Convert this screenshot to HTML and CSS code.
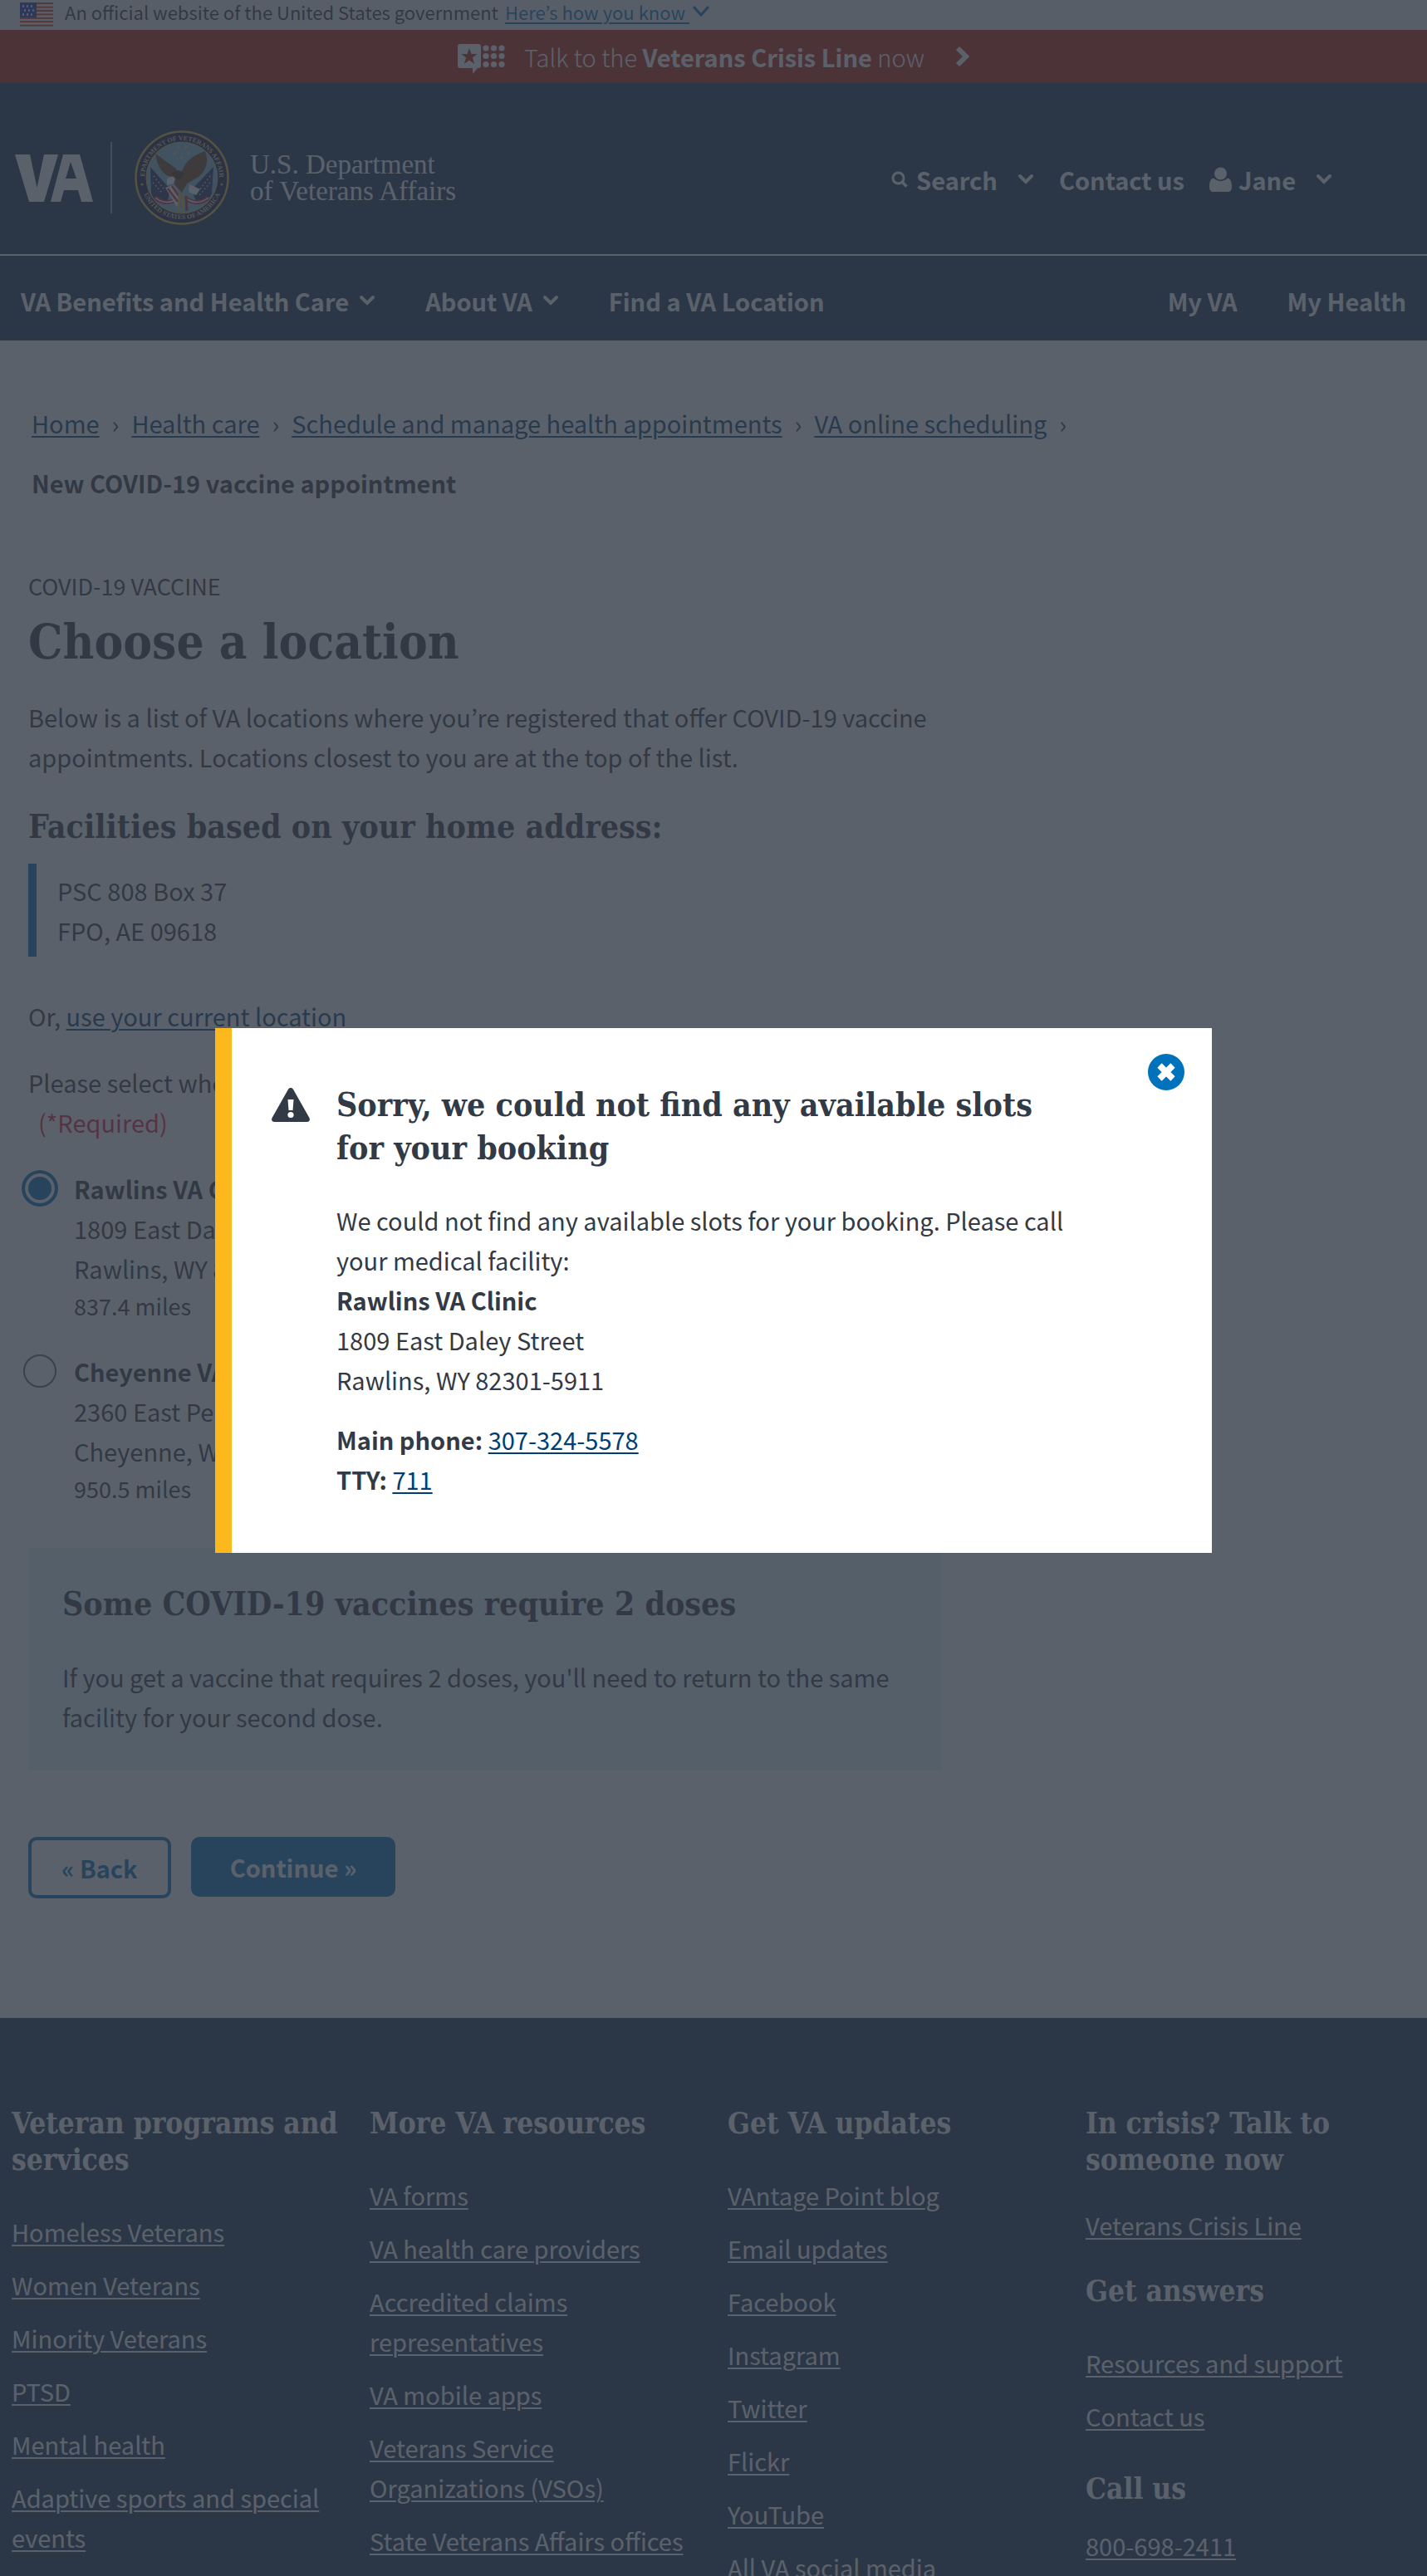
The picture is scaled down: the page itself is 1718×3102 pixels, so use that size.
FILE: index.html
```html
<!DOCTYPE html>
<html lang="en">
<head>
<meta charset="utf-8">
<meta name="viewport" content="width=device-width, initial-scale=1">
<title>New COVID-19 vaccine appointment | Veterans Affairs</title>
<link rel="stylesheet" href="styles.css">
</head>
<body>
<svg class="sprite" aria-hidden="true">
  <symbol id="chevron" viewBox="0 0 20 14"><path d="M3 3l7 7 7-7" fill="none" stroke="currentColor" stroke-width="4" stroke-linecap="round"/></symbol>
  <symbol id="star" viewBox="-10 -10 20 20"><path d="M0-10L2.3-3.1H9.5L3.7 1.2 5.9 8.1 0 3.9-5.9 8.1-3.7 1.2-9.5-3.1H-2.3Z" fill="currentColor"/></symbol>
</svg>

<header>
  <div class="gov">
    <svg class="gov-flag" viewBox="0 0 40 29" aria-hidden="true">
      <path fill="#fff" d="M0 0h40v29H0z"/>
      <path stroke="#db3e1f" stroke-width="2.3" d="M0 1.2h40M0 5.6h40M0 10h40M0 14.4h40M0 18.8h40M0 23.2h40M0 27.6h40"/>
      <path fill="#1e33b1" d="M0 0h20v18H0z"/>
      <path stroke="#fff" stroke-width="2.4" stroke-dasharray="2 3" d="M3 4.500h15M5 9.500h13M3 14.500h15"/>
    </svg>
    <span>An official website of the United States government</span>
    <button class="gov-link" type="button"><u>Here’s how you know </u><svg class="chev" viewBox="0 0 20 14" aria-hidden="true"><path d="M1 1l9 10 9-10" fill="none" stroke="currentColor" stroke-width="3"/></svg></button>
  </div>

  <a class="crisis" href="#crisis">
    <svg class="crisis-icon" viewBox="0 0 57 36" aria-hidden="true">
      <path fill="#fff" d="M3 0h22a3 3 0 0 1 3 3v23a3 3 0 0 1-3 3h-1l-6 7v-7H3a3 3 0 0 1-3-3V3a3 3 0 0 1 3-3z"/>
      <path fill="#b51d09" d="M14 5l2.600 7h6.900l-5.600 4.500 2.300 7.500-6.200-4.600L7.800 24l2.300-7.500L4.500 12h6.900z"/>
      <g fill="#fff"><circle cx="34" cy="5" r="3.600"/><circle cx="43.500" cy="5" r="3.600"/><circle cx="53" cy="5" r="3.600"/><circle cx="34" cy="14.500" r="3.600"/><circle cx="43.500" cy="14.500" r="3.600"/><circle cx="53" cy="14.500" r="3.600"/><circle cx="34" cy="24.500" r="3.600"/><circle cx="43.500" cy="24.500" r="3.600"/><circle cx="53" cy="24.500" r="3.600"/></g>
    </svg>
    <span class="crisis-text">Talk to the <b>Veterans Crisis Line</b> now</span>
    <svg class="crisis-arrow" viewBox="0 0 17 26" aria-hidden="true"><path d="M3 3l10 10L3 23" fill="none" stroke="#fff" stroke-width="6"/></svg>
  </a>

  <div class="masthead">
    <a class="brand" href="#home" aria-label="U.S. Department of Veterans Affairs">
      <svg class="brand-va" viewBox="0 0 94 57" aria-hidden="true"><path fill="#fff" fill-rule="evenodd" d="M0 0h18l8.500 40L35 0h17L35 57H17zM58 0h20l16 57H80l-4-14H59l-4 14H43zM61 29h13L67 9z"/></svg>
      <span class="brand-rule"></span>
      <svg class="brand-seal" viewBox="0 0 116 116" aria-hidden="true">
        <defs>
          <path id="arcTop" d="M13 58a45 45 0 0 1 90 0"/>
          <path id="arcLow" d="M8 58a50 50 0 0 0 100 0"/>
        </defs>
        <circle cx="58" cy="58" r="57" fill="#14183f"/>
        <circle cx="58" cy="58" r="55.500" fill="none" stroke="#d9b23c" stroke-width="2.500"/>
        <circle cx="58" cy="58" r="43" fill="#7fb5cf" stroke="#d9b23c"/>
        <g class="seal-text"><text><textPath href="#arcTop" startOffset="50%" text-anchor="middle">DEPARTMENT OF VETERANS AFFAIRS</textPath></text>
        <text><textPath href="#arcLow" startOffset="50%" text-anchor="middle">UNITED STATES OF AMERICA</textPath></text></g>
        <g fill="#d9b23c"><circle cx="10" cy="66" r="1.500"/><circle cx="106" cy="66" r="1.500"/></g>
        <g color="#e8d25a"><use href="#star" x="51" y="18" width="5" height="5"/><use href="#star" x="60" y="18" width="5" height="5"/><use href="#star" x="47" y="26" width="5" height="5"/><use href="#star" x="63" y="26" width="5" height="5"/><use href="#star" x="55" y="31" width="5" height="5"/></g>
        <path fill="#1e2860" d="M20 45l24 27-4 18c-10-2-16-5-19-13zM96 45L70 72l6 18c10-2 15-6 18-13z"/>
        <path stroke="#dfe6f2" stroke-width="1.500" stroke-dasharray="1.500 3" d="M24 56l12 15M23 64l12 13M92 56L79 73M92 64L79 79"/>
        <path stroke="#c8202f" stroke-width="5" fill="none" d="M26 82c10 8 18 6 26 2M90 82c-10 8-18 6-26 2"/>
        <path stroke="#fff" stroke-width="1.500" fill="none" d="M26 82c10 8 18 6 26 2M90 82c-10 8-18 6-26 2"/>
        <path fill="#6d4220" d="M26 29l25 18 3 8 5-7c4-10 12-17 27-22 4 10 3 22-8 31l-14 8-6 11-8-9-5-10c-9-2-16-10-19-28z"/>
        <path fill="#4a2a15" d="M44 52l10-3 8 4-8 8z"/>
        <path fill="#fff" d="M40 60c4-5 9-4 10 0l-2 5-8 2zM67 66l5 2 8 4-5 7-9-4z"/>
        <path fill="#fff" d="M38 70l10-3 8 12-4 14z"/>
        <path stroke="#c8202f" stroke-width="2.500" d="M41 71l12 16M46 68l9 13"/>
        <path stroke="#d9b23c" stroke-width="2.500" d="M55 76l-1 22M59 78v19"/>
        <path stroke="#c8202f" stroke-width="3" d="M63 80l1 18"/>
      </svg>
      <span class="brand-name">U.S. Department<br>of Veterans Affairs</span>
    </a>
    <div class="tools">
      <button class="tool tool-search" type="button">
        <svg class="search-icon" viewBox="0 0 20 20" aria-hidden="true"><circle cx="8.500" cy="8.500" r="6.500" fill="none" stroke="currentColor" stroke-width="3"/><path d="M13 13l5.500 5.500" stroke="currentColor" stroke-width="3.500"/></svg>
        <span>Search</span><svg class="chev"><use href="#chevron"/></svg>
      </button>
      <a class="tool" href="#contact">Contact us</a>
      <button class="tool tool-user" type="button">
        <svg class="user-icon" viewBox="0 0 27 30" aria-hidden="true"><circle cx="13.500" cy="8" r="7.500" fill="currentColor"/><path fill="currentColor" d="M5 13.500c5 4.500 12 4.500 17 0 4 1 5 5 5 11 0 3-2 5.500-4 5.500H4c-2 0-4-2.500-4-5.500 0-6 1-10 5-11z"/></svg>
        <span>Jane</span><svg class="chev"><use href="#chevron"/></svg>
      </button>
    </div>
  </div>

  <nav class="nav" aria-label="Main">
    <button type="button">VA Benefits and Health Care <svg class="chev"><use href="#chevron"/></svg></button>
    <button type="button">About VA <svg class="chev"><use href="#chevron"/></svg></button>
    <a href="#find">Find a VA Location</a>
    <a class="nav-right" href="#myva">My VA</a>
    <a href="#health">My Health</a>
  </nav>
</header>

<main class="main">
  <nav class="crumbs" aria-label="Breadcrumb">
    <a href="#home">Home</a><span class="sep">›</span>
    <a href="#care">Health care</a><span class="sep">›</span>
    <a href="#schedule">Schedule and manage health appointments</a><span class="sep">›</span>
    <a href="#online">VA online scheduling</a><span class="sep">›</span>
    <b class="crumb-current">New COVID-19 vaccine appointment</b>
  </nav>

  <form class="content">
    <p class="kicker">COVID-19 VACCINE</p>
    <h1>Choose a location</h1>
    <p class="intro">Below is a list of VA locations where you’re registered that offer COVID-19 vaccine appointments. Locations closest to you are at the top of the list.</p>
    <h2>Facilities based on your home address:</h2>
    <address class="home-address">PSC 808 Box 37<br>FPO, AE 09618</address>
    <p class="locate">Or, <a href="#current">use your current location</a></p>
    <fieldset>
      <legend>Please select where you’d like to have your appointment. <span class="required">(*Required)</span></legend>
      <label class="option"><input type="radio" name="facility" checked>
        <span><b>Rawlins VA Clinic</b><br>1809 East Daley Street<br>Rawlins, WY 82301-5911<span class="miles">837.4 miles</span></span></label>
      <label class="option"><input type="radio" name="facility">
        <span><b>Cheyenne VA Medical Center</b><br>2360 East Pershing Boulevard<br>Cheyenne, WY 82001-5356<span class="miles">950.5 miles</span></span></label>
    </fieldset>
    <section class="featured">
      <h2>Some COVID-19 vaccines require 2 doses</h2>
      <p>If you get a vaccine that requires 2 doses, you'll need to return to the same facility for your second dose.</p>
    </section>
    <div class="actions">
      <button class="btn btn-back" type="button">« Back</button>
      <button class="btn btn-next" type="submit">Continue »</button>
    </div>
  </form>
</main>

<footer class="footer">
  <section>
    <h2>Veteran programs and services</h2>
    <ul>
      <li><a href="#f">Homeless Veterans</a></li>
      <li><a href="#f">Women Veterans</a></li>
      <li><a href="#f">Minority Veterans</a></li>
      <li><a href="#f">PTSD</a></li>
      <li><a href="#f">Mental health</a></li>
      <li><a href="#f">Adaptive sports and special events</a></li>
    </ul>
  </section>
  <section>
    <h2>More VA resources</h2>
    <ul>
      <li><a href="#f">VA forms</a></li>
      <li><a href="#f">VA health care providers</a></li>
      <li><a href="#f">Accredited claims<br>representatives</a></li>
      <li><a href="#f">VA mobile apps</a></li>
      <li><a href="#f">Veterans Service<br>Organizations (VSOs)</a></li>
      <li><a href="#f">State Veterans Affairs offices</a></li>
    </ul>
  </section>
  <section>
    <h2>Get VA updates</h2>
    <ul>
      <li><a href="#f">VAntage Point blog</a></li>
      <li><a href="#f">Email updates</a></li>
      <li><a href="#f">Facebook</a></li>
      <li><a href="#f">Instagram</a></li>
      <li><a href="#f">Twitter</a></li>
      <li><a href="#f">Flickr</a></li>
      <li><a href="#f">YouTube</a></li>
      <li><a href="#f">All VA social media</a></li>
    </ul>
  </section>
  <section class="footer-help">
    <h2>In crisis? Talk to<br>someone now</h2>
    <ul class="tight"><li><a href="#f">Veterans Crisis Line</a></li></ul>
    <h2>Get answers</h2>
    <ul>
      <li><a href="#f">Resources and support</a></li>
      <li><a href="#f">Contact us</a></li>
    </ul>
    <h2>Call us</h2>
    <ul class="phone"><li><a href="#f">800-698-2411</a></li></ul>
  </section>
</footer>

<div class="overlay">
  <div class="modal" role="alertdialog" aria-modal="true" aria-labelledby="modal-title">
    <button class="modal-close" type="button" aria-label="Close this modal">
      <svg viewBox="0 0 44 44" aria-hidden="true"><circle cx="22" cy="22" r="22" fill="#0071bb"/><path d="M14 14l16 16M30 14L14 30" stroke="#fff" stroke-width="7.500"/></svg>
    </button>
    <svg class="modal-icon" viewBox="0 0 46 41" aria-hidden="true"><path fill="#323a45" d="M20 1.800c1.300-2.400 4.700-2.400 6 0l19.500 34.500c1.200 2.200-.3 4.700-3 4.700h-39c-2.700 0-4.200-2.500-3-4.700z"/><path fill="#fff" d="M19.500 14h7l-1 13h-5z"/><circle cx="23" cy="32.500" r="3.600" fill="#fff"/></svg>
    <div class="modal-body">
      <h2 id="modal-title">Sorry, we could not find any available slots for your booking</h2>
      <p>We could not find any available slots for your booking. Please call your medical facility:<br><b>Rawlins VA Clinic</b><br>1809 East Daley Street<br>Rawlins, WY 82301-5911</p>
      <p class="modal-phones"><b>Main phone:</b> <a href="tel:3073245578">307-324-5578</a><br><b>TTY:</b> <a href="tel:711">711</a></p>
    </div>
  </div>
</div>
</body>
</html>
```
FILE: styles.css
```css
* { box-sizing: border-box; }

body {
  height: 100vh;
  margin: 0;
  overflow: hidden;
  background: #fff;
  color: #323a45;
  font: 29px/48px "Noto Sans CJK KR", "Noto Sans", sans-serif;
}

h1, h2, p, ul, fieldset { margin: 0; padding: 0; border: 0; }
h1, h2 { font-family: "DejaVu Serif Condensed", "DejaVu Serif", serif; font-weight: 700; }
h2 { font-size: 39px; line-height: 40px; }
ul { list-style: none; }
a { color: #003e73; text-underline-offset: 3px; text-decoration-thickness: 2px; }
button { padding: 0; border: 0; background: none; color: inherit; font: inherit; cursor: pointer; }
.sprite { position: absolute; width: 0; height: 0; }
.chev { flex: none; width: 20px; height: 14px; }

/* government banner */
.gov {
  display: flex;
  align-items: center;
  height: 36px;
  padding: 0 24px 8px;
  background: #f1f1f1;
  font-size: 22px;
  line-height: 28px;
}
.gov-flag { width: 40px; height: 29px; margin: 6px 14px 0 0; }
.gov-link { display: flex; align-items: center; gap: 4px; margin-left: 8px; color: #0071bb; }
.gov-link u { white-space: pre; text-decoration-thickness: 2px; text-underline-offset: 3px; }

/* crisis line */
.crisis {
  display: flex;
  align-items: center;
  justify-content: center;
  height: 64px;
  background: #b51d09;
  color: #fff;
  text-decoration: none;
}
.crisis-icon { width: 57px; height: 36px; margin: 6px 23px 0 0; }
.crisis-text { font-weight: 300; }
.crisis-text b { font-weight: 700; }
.crisis-arrow { width: 17px; height: 26px; margin-left: 37px; }

/* masthead */
.masthead {
  display: flex;
  align-items: center;
  justify-content: space-between;
  height: 208px;
  padding: 22px 114px 0 18px;
  border-bottom: 2px solid #fff;
  background: #112e51;
  color: #fff;
}
.brand { display: flex; align-items: center; color: inherit; text-decoration: none; }
.brand-va { width: 94px; height: 57px; }
.brand-rule { width: 2px; height: 86px; margin: 0 26px 0 21px; background: #8b9bad; }
.brand-seal { width: 116px; height: 116px; margin-right: 24px; }
.seal-text { fill: #d9cf96; font: 700 8px "Liberation Serif", serif; }
.brand-name { font: 33px/32px "Liberation Serif", serif; }
.tools { display: flex; align-items: center; gap: 30px; padding-top: 4px; font-weight: 700; }
.tool { display: flex; align-items: center; color: inherit; text-decoration: none; }
.search-icon { width: 20px; height: 20px; margin-right: 10px; }
.user-icon { width: 27px; height: 30px; margin-right: 8px; }
.tool .chev { margin-left: 24px; }

.nav {
  display: flex;
  align-items: center;
  gap: 60px;
  height: 102px;
  padding: 6px 25px 0;
  background: #112e51;
  color: #fff;
  font-weight: 700;
}
.nav a { color: inherit; text-decoration: none; }
.nav button { display: flex; align-items: center; gap: 12px; }
.nav-right { margin-left: auto; }

/* page content */
.main { padding: 75px 34px 144px; }
.crumbs {
  display: flex;
  flex-wrap: wrap;
  gap: 24px 15px;
  max-width: 1400px;
  padding-left: 4px;
}
.crumb-current { flex-basis: 100%; }
.content { width: 66.667%; max-width: 1100px; padding-top: 81px; }
.kicker { font-size: 27px; line-height: 40px; }
h1 { margin: 21px 0 40px; font-size: 58px; line-height: 52px; }
.intro { margin-bottom: 40px; }
.home-address {
  margin: 25px 0 47px;
  padding: 8px 25px;
  border-left: 10px solid #0071bb;
  font-style: normal;
}
.locate { margin-bottom: 32px; }
legend { padding: 0; }
.required { display: block; padding-left: 12px; color: #e31c3d; }
.option { display: flex; gap: 21px; margin: 32px 0 0 -6px; }
.option input {
  appearance: none;
  flex: none;
  width: 40px;
  height: 40px;
  margin: 4px 0 0;
  border: 2px solid #5b616b;
  border-radius: 50%;
  background: #fff;
}
.option input:checked {
  border-color: #0071bb;
  background: #0071bb;
  box-shadow: 0 0 0 2px #0071bb, inset 0 0 0 4px #fff;
}
.miles { display: block; font-size: 27px; line-height: 44px; }
.featured { margin-top: 49px; padding: 47px 41px 41px; background: #e1f3f8; }
.featured h2 { margin-bottom: 44px; }
.actions { display: flex; align-items: flex-start; gap: 24px; margin-top: 80px; }
.btn { height: 72px; border-radius: 10px; font-weight: 700; line-height: 70px; }
.btn-back { height: 74px; padding: 0 36px; border: 4px solid #0071bb; color: #0071bb; line-height: 62px; }
.btn-next { padding: 0 47px; background: #0071bb; color: #fff; }

/* footer */
.footer {
  display: grid;
  grid-template-columns: repeat(3, 1fr) 411px;
  padding: 105px 0 80px 14px;
  background: #112e51;
  color: #fff;
}
.footer a { color: inherit; }
.footer h2 { margin-bottom: 40px; font-size: 35px; line-height: 44px; }
.footer li { margin-bottom: 16px; }
.footer .tight { margin: -8px 0 34px; }
.footer-help ul + h2 { margin-top: 42px; }
.footer-help .tight + h2 { margin-top: 0; }
.footer .phone { margin-top: -18px; }

/* modal */
.overlay {
  position: fixed;
  inset: 0;
  display: flex;
  align-items: center;
  justify-content: center;
  padding-top: 6px;
  background: rgba(50, 58, 69, 0.8);
}
.modal {
  position: relative;
  display: flex;
  align-items: flex-start;
  gap: 32px;
  width: 100%;
  max-width: 1200px;
  padding: 66px 160px 65px 48px;
  border-left: 20px solid #fdb81e;
  background: #fff;
}
.modal-icon { flex: none; width: 46px; height: 41px; margin-top: 6px; }
.modal-body h2 { margin-bottom: 37px; line-height: 52px; }
.modal-phones { margin-top: 24px; }
.modal-close { position: absolute; top: 31px; right: 33px; width: 44px; height: 44px; }
.modal-close svg { display: block; }
```
